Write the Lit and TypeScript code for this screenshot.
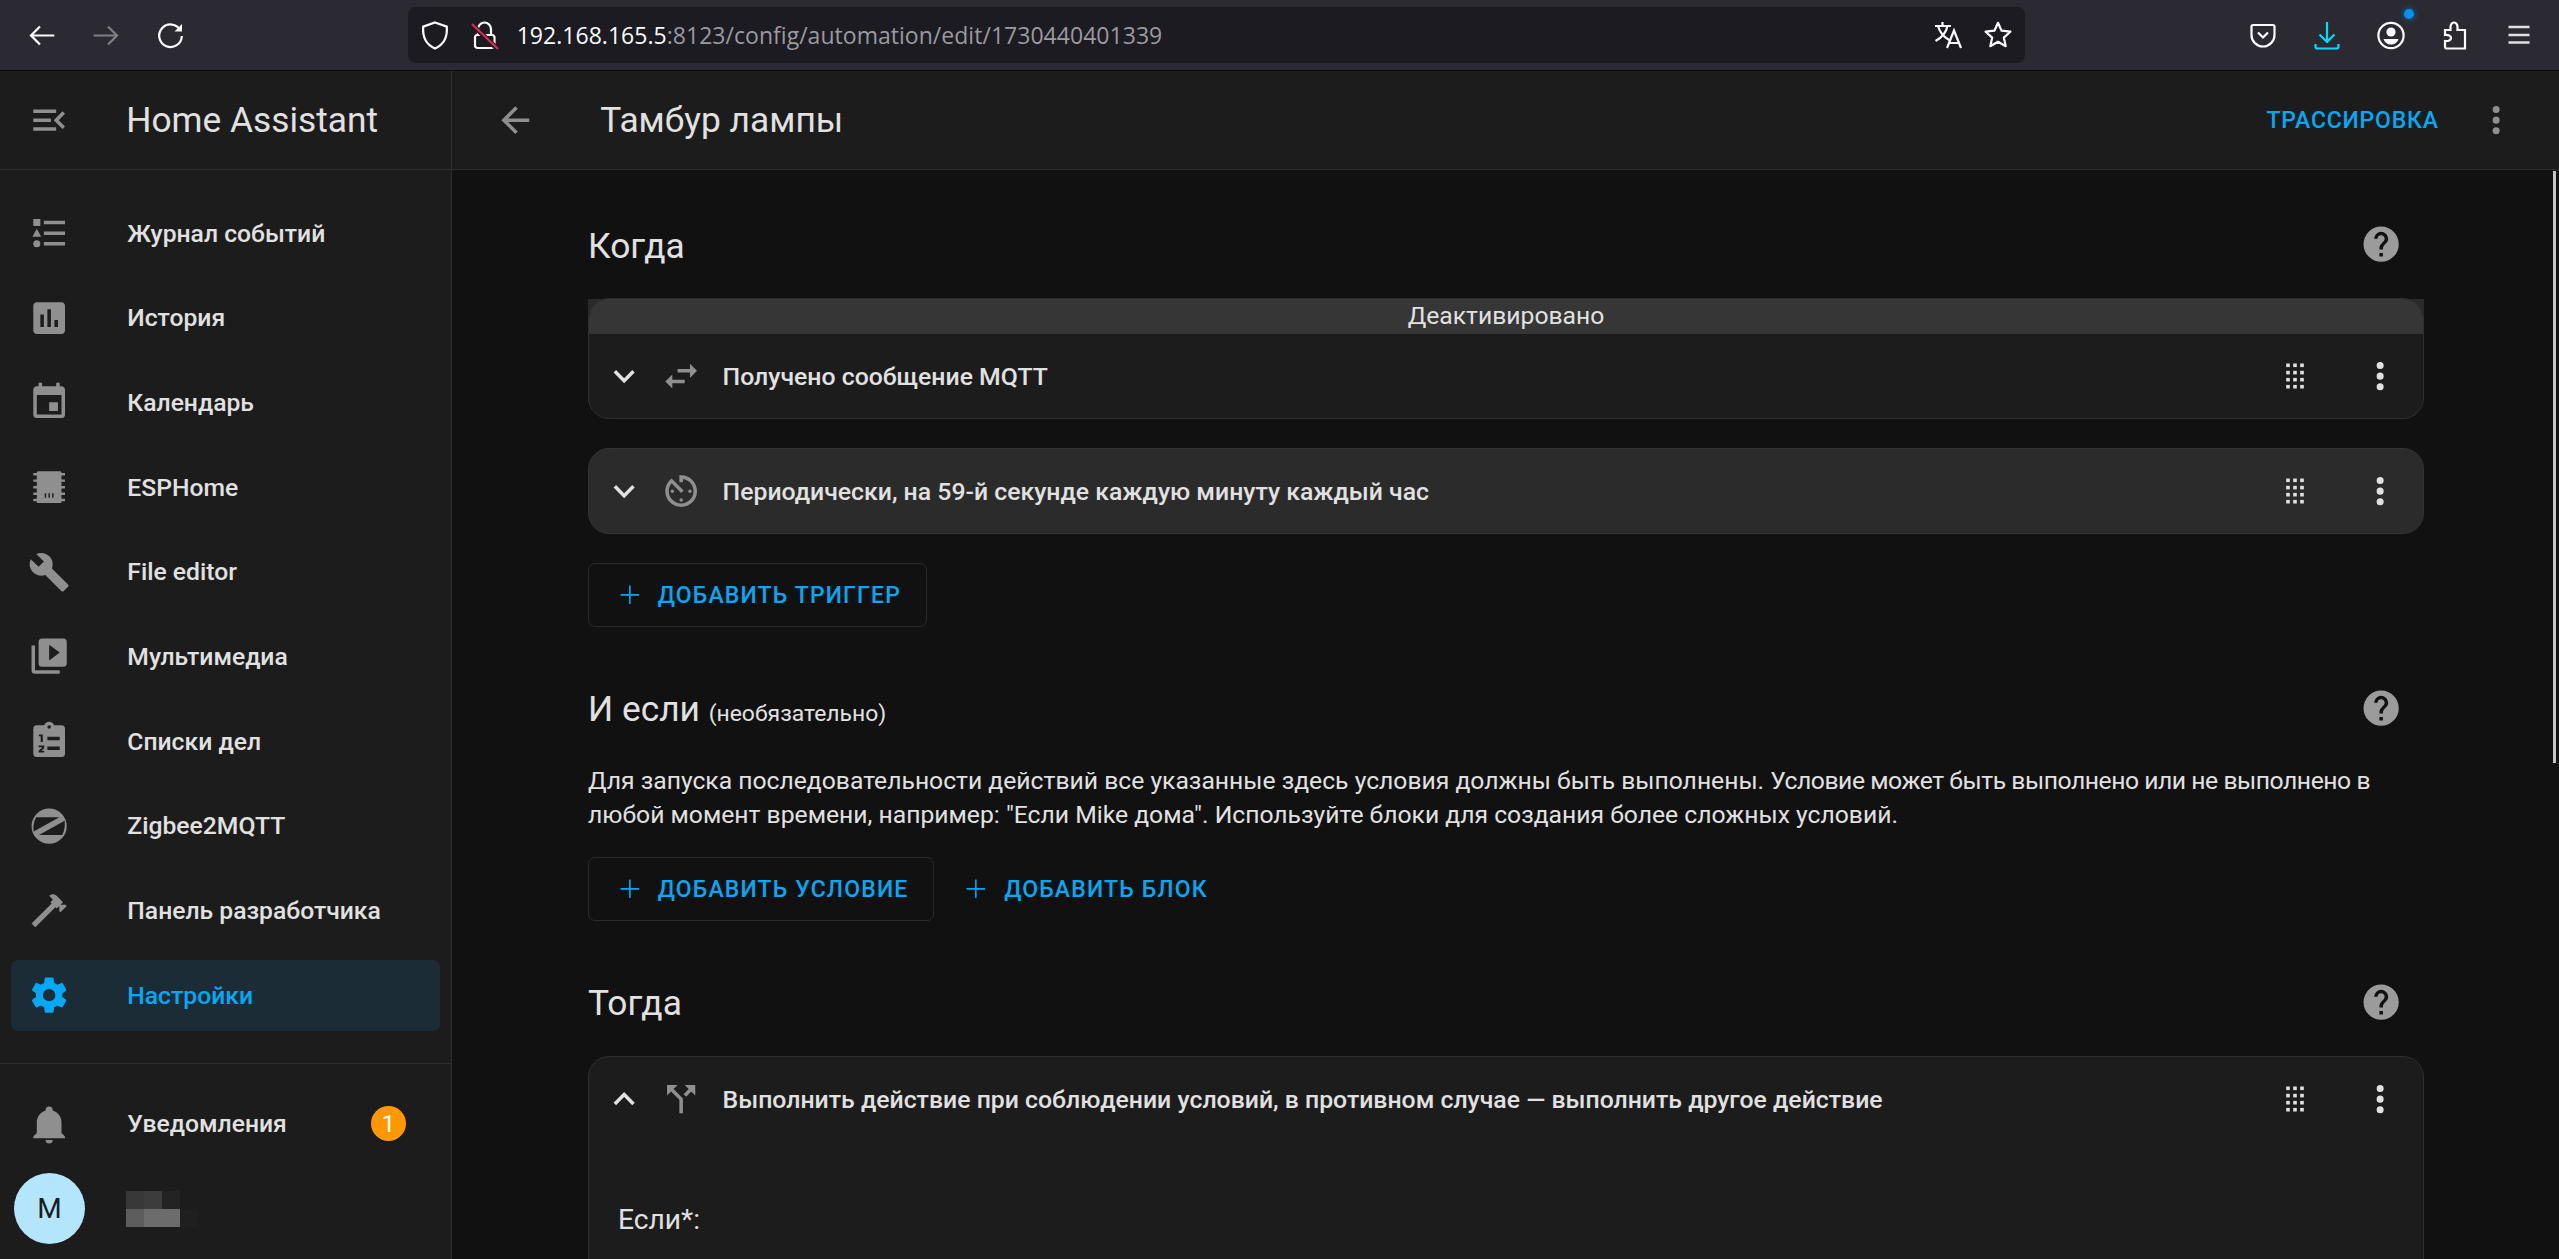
import { LitElement, html, css, svg } from "lit";
import { customElement } from "lit/decorators.js";

const P = {
  menuOpen: "M21,15.61L19.59,17L14.58,12L19.59,7L21,8.39L17.44,12L21,15.61M3,6H16V8H3V6M3,13V11H13V13H3M3,18V16H16V18H3Z",
  journal: "M5,9.5L7.5,14H2.5L5,9.5M3,4H7V8H3V4M5,20A2,2 0 0,0 7,18A2,2 0 0,0 5,16A2,2 0 0,0 3,18A2,2 0 0,0 5,20M9,5V7H21V5H9M9,19H21V17H9V19M9,13H21V11H9V13Z",
  chart: "M19 3H5C3.9 3 3 3.9 3 5V19C3 20.1 3.9 21 5 21H19C20.1 21 21 20.1 21 19V5C21 3.9 20.1 3 19 3M9 17H7V10H9V17M13 17H11V7H13V17M17 17H15V13H17V17Z",
  calendar: "M19,19H5V8H19M16,1V3H8V1H6V3H5C3.89,3 3,3.89 3,5V19A2,2 0 0,0 5,21H19A2,2 0 0,0 21,19V5C21,3.89 20.1,3 19,3H18V1M17,12H12V17H17V12Z",
  chip: "M5 3.5A1 1 0 0 1 6 3H18A1 1 0 0 1 19 3.5V4H21V5.4H19V7.6H21V9H19V11.4H21V12.8H19V15H21V16.4H19V18.6H21V20H19V20.5A1 1 0 0 1 18 21H6A1 1 0 0 1 5 20.5V20H3V18.6H5V16.4H3V15H5V12.8H3V11.4H5V9H3V7.6H5V5.4H3V4H5V3.5ZM9.5 15.5V18H10.3V15.5H9.5ZM11.6 15.5V18H12.4V15.5H11.6ZM13.7 15.5V18H14.5V15.5H13.7Z",
  wrench: "M22.7,19L13.6,9.9C14.5,7.6 14,4.9 12.1,3C10.1,1 7.1,0.6 4.7,1.7L9,6L6,9L1.6,4.7C0.4,7.1 0.9,10.1 2.9,12.1C4.8,14 7.5,14.5 9.8,13.6L18.9,22.7C19.3,23.1 19.9,23.1 20.3,22.7L22.6,20.4C23.1,20 23.1,19.3 22.7,19Z",
  media: "M4,6H2V20A2,2 0 0,0 4,22H18V20H4M20,2H8A2,2 0 0,0 6,4V16A2,2 0 0,0 8,18H20A2,2 0 0,0 22,16V4A2,2 0 0,0 20,2M12,14.5V5.5L18,10L12,14.5Z",
  todo: "M12,3A1,1 0 0,1 13,4A1,1 0 0,1 12,5A1,1 0 0,1 11,4A1,1 0 0,1 12,3M19,3H14.82C14.4,1.84 13.3,1 12,1C10.7,1 9.6,1.84 9.18,3H5A2,2 0 0,0 3,5V19A2,2 0 0,0 5,21H19A2,2 0 0,0 21,19V5A2,2 0 0,0 19,3ZM11,9.5V11.5H18V9.5H11ZM11,15V17H18V15H11ZM6.2,8.2V9.2H7.2V12.5H8.4V8.2H6.2ZM6,14.4V15.4H8V15.8L6,17.4V18.4H9.2V17.4H7.6L9.2,16V14.4H6Z",
  zigbee: "M12,2A10,10 0 0,0 2,12A10,10 0 0,0 12,22A10,10 0 0,0 22,12A10,10 0 0,0 12,2ZM4.6,7H17.8L3.2,15C2.9,12.5 3.2,9.5 4.6,7ZM20.8,9C21.1,11.5 20.8,14.5 19.4,17H6.2L20.8,9Z",
  hammer: "M2 19.63L13.43 8.2L12.72 7.5L14.14 6.07L12 3.89C13.2 2.7 15.09 2.7 16.27 3.89L19.87 7.5L18.45 8.91H21.29L22 9.62L18.45 13.21L17.74 12.5V9.62L16.27 11.04L15.56 10.33L4.13 21.76L2 19.63Z",
  cog: "M12,15.5A3.5,3.5 0 0,1 8.5,12A3.5,3.5 0 0,1 12,8.5A3.5,3.5 0 0,1 15.5,12A3.5,3.5 0 0,1 12,15.5M19.43,12.97C19.47,12.65 19.5,12.33 19.5,12C19.5,11.67 19.47,11.34 19.43,11L21.54,9.37C21.73,9.22 21.78,8.95 21.66,8.73L19.66,5.27C19.54,5.05 19.27,4.96 19.05,5.05L16.56,6.05C16.04,5.66 15.5,5.32 14.87,5.07L14.5,2.42C14.46,2.18 14.25,2 14,2H10C9.75,2 9.54,2.18 9.5,2.42L9.13,5.07C8.5,5.32 7.96,5.66 7.44,6.05L4.95,5.05C4.73,4.96 4.46,5.05 4.34,5.27L2.34,8.73C2.21,8.95 2.27,9.22 2.46,9.37L4.57,11C4.53,11.34 4.5,11.67 4.5,12C4.5,12.33 4.53,12.65 4.57,12.97L2.46,14.63C2.27,14.78 2.21,15.05 2.34,15.27L4.34,18.73C4.46,18.95 4.73,19.03 4.95,18.95L7.44,17.94C7.96,18.34 8.5,18.68 9.13,18.93L9.5,21.58C9.54,21.82 9.75,22 10,22H14C14.25,22 14.46,21.82 14.5,21.58L14.87,18.93C15.5,18.67 16.04,18.34 16.56,17.94L19.05,18.95C19.27,19.03 19.54,18.95 19.66,18.73L21.66,15.27C21.78,15.05 21.73,14.78 21.54,14.63L19.43,12.97Z",
  bell: "M21,19V20H3V19L5,17V11C5,7.9 7.03,5.17 10,4.29C10,4.19 10,4.1 10,4A2,2 0 0,1 12,2A2,2 0 0,1 14,4C14,4.1 14,4.19 14,4.29C16.97,5.17 19,7.9 19,11V17L21,19M14,21A2,2 0 0,1 12,23A2,2 0 0,1 10,21",
  arrowLeft: "M20,11V13H8L13.5,18.5L12.08,19.92L4.16,12L12.08,4.08L13.5,5.5L8,11H20Z",
  dots: "M12,16A2,2 0 0,1 14,18A2,2 0 0,1 12,20A2,2 0 0,1 10,18A2,2 0 0,1 12,16M12,10A2,2 0 0,1 14,12A2,2 0 0,1 12,14A2,2 0 0,1 10,12A2,2 0 0,1 12,10M12,4A2,2 0 0,1 14,6A2,2 0 0,1 12,8A2,2 0 0,1 10,6A2,2 0 0,1 12,4Z",
  help: "M15.07,11.25L14.17,12.17C13.45,12.89 13,13.5 13,15H11V14.5C11,13.39 11.45,12.39 12.17,11.67L13.41,10.41C13.78,10.05 14,9.55 14,9C14,7.89 13.1,7 12,7A2,2 0 0,0 10,9H8A4,4 0 0,1 12,5A4,4 0 0,1 16,9C16,9.88 15.64,10.67 15.07,11.25M13,19H11V17H13M12,2A10,10 0 0,0 2,12A10,10 0 0,0 12,22A10,10 0 0,0 22,12C22,6.47 17.5,2 12,2Z",
  swap: "M21,9L17,5V8H10V10H17V13M7,11L3,15L7,19V16H14V14H7V11Z",
  timer: "M11,17A1,1 0 0,0 12,18A1,1 0 0,0 13,17A1,1 0 0,0 12,16A1,1 0 0,0 11,17M11,3V7H13V5.08C16.39,5.57 19,8.47 19,12A7,7 0 0,1 12,19A7,7 0 0,1 5,12C5,10.32 5.59,8.78 6.58,7.58L12,13L13.41,11.59L6.61,4.79V4.81C4.42,6.45 3,9.05 3,12A9,9 0 0,0 12,21A9,9 0 0,0 21,12A9,9 0 0,0 12,3M18,12A1,1 0 0,0 17,11A1,1 0 0,0 16,12A1,1 0 0,0 17,13A1,1 0 0,0 18,12M6,12A1,1 0 0,0 7,13A1,1 0 0,0 8,12A1,1 0 0,0 7,11A1,1 0 0,0 6,12Z",
  split: "M14,4L16.29,6.29L13.41,9.17L14.83,10.59L17.71,7.71L20,10V4M10,4H4V10L6.29,7.71L11,12.41V20H13V11.59L7.71,6.29",
  down: "M7.41,8.58L12,13.17L16.59,8.58L18,10L12,16L6,10L7.41,8.58Z",
  up: "M7.41,15.41L12,10.83L16.59,15.41L18,14L12,8L6,14L7.41,15.41Z",
  plus: "M19,12.6H12.6V19H11.4V12.6H5V11.4H11.4V5H12.6V11.4H19V12.6Z",
};

const mdi = (d: string, cls = "") =>
  html`<svg class="mdi ${cls}" viewBox="0 0 24 24"><path fill-rule="evenodd" d=${d}></path></svg>`;

const gridDots = () => {
  const xs = [7, 14, 21];
  const ys = [3.3, 10.6, 17.7, 24.7];
  return html`<svg class="grip" viewBox="0 0 28 28">
    ${ys.flatMap((y) => xs.map((x) => svg`<rect x=${x - 1.8} y=${y - 1.8} width="3.6" height="3.6"></rect>`))}
  </svg>`;
};

const ff = {
  back: svg`<path d="M26.3 14.5H3.5M12 5.5L3 14.5L12 23.5"></path>`,
  reload: svg`<path d="M24.5 9.5A11.3 11.3 0 1 0 25.8 15"></path><path class="fill" d="M18.5 10.5L26 3V10.5Z"></path>`,
  shield: svg`<path d="M14 1.5L25.8 5.6C26.6 16 23 23.5 14 27.5C5 23.5 1.4 16 2.2 5.6Z"></path>`,
  translate: svg`<path d="M1 5H17M8.5 1V5M13.5 5C12 12 7 17 1.5 20M4 5C6 12 10 16 15 19M13 27L20 9.5L27 27M15.3 22H24.7"></path>`,
  star: svg`<path d="M14 1.8L17.6 9.7L26.4 10.7L19.8 16.6L21.7 25.2L14 20.8L6.3 25.2L8.2 16.6L1.6 10.7L10.4 9.7Z" stroke-linejoin="round"></path>`,
  pocket: svg`<path d="M4 4H24A1.5 1.5 0 0 1 25.5 5.5V14A11.5 11.5 0 0 1 2.5 14V5.5A1.5 1.5 0 0 1 4 4Z"></path><path d="M9 11.5L14 16.5L19 11.5"></path>`,
  download: svg`<path d="M14 1V21M6.5 13.5L14 21L21.5 13.5M2.5 23V25.5A2 2 0 0 0 4.5 27.5H23.5A2 2 0 0 0 25.5 25.5V23"></path>`,
  account: svg`<circle cx="14" cy="14.5" r="12.6"></circle><circle class="fill" cx="14" cy="11" r="4.6" stroke="none"></circle><path class="fill" stroke="none" d="M6.5 18H21.5C20.5 21.5 17.5 23.5 14 23.5C10.5 23.5 7.5 21.5 6.5 18Z"></path>`,
  puzzle: svg`<path d="M4 9H9.5C9 5.5 10 1.5 13 1.5C16 1.5 17 5.5 16.5 9H24V27.5H6A2 2 0 0 1 4 25.5V20C7.5 20.5 10 19 10 17C10 15 7.5 13.5 4 14V9Z"></path>`,
  menu: svg`<path d="M3.5 6H24.5M3.5 14H24.5M3.5 21.5H24.5"></path>`,
};

const ffIcon = (content: unknown, cls = "") =>
  html`<svg class="ff ${cls}" viewBox="0 0 28 28">${content}</svg>`;

const NAV = [
  ["Журнал событий", P.journal],
  ["История", P.chart],
  ["Календарь", P.calendar],
  ["ESPHome", P.chip],
  ["File editor", P.wrench],
  ["Мультимедиа", P.media],
  ["Списки дел", P.todo],
  ["Zigbee2MQTT", P.zigbee],
  ["Панель разработчика", P.hammer],
  ["Настройки", P.cog],
];

const PIX = ["c1", "c2", "c3", "c0", "c4", "c5", "c5", "c6"];

@customElement("app-root")
export class AppRoot extends LitElement {
  static styles = css`
    :host { display: block; width: 2559px; height: 1259px; overflow: hidden; background: #111; font-family: Roboto, sans-serif; color: #e1e1e1; }
    * { box-sizing: border-box; }
    .mdi { width: 42.3px; height: 42.3px; fill: #8f8f8f; flex: none; display: block; }
    .toolbar { height: 71px; background: #2b2a33; border-bottom: 1px solid #0c0c0d; display: flex; align-items: center; padding-left: 9.7px; }
    .tb { width: 64px; height: 56px; display: flex; align-items: center; justify-content: center; flex: none; position: relative; }
    .ff { width: 28px; height: 28px; fill: none; stroke: #fbfbfe; stroke-width: 2.2; display: block; flex: none; overflow: visible; }
    .ff .fill { fill: #fbfbfe; stroke: none; }
    .ff.dim { opacity: .4; }
    .ff.cyan { stroke: #00ddff; }
    .ff.thick { stroke-width: 2.4; stroke: #dedee3; }
    .url { margin-left: 206px; margin-right: 206.6px; width: 1617px; height: 56px; background: #1c1b22; border-radius: 8px; display: flex; align-items: center; padding: 0 13px; flex: none; }
    .lock { margin-left: 22px; position: relative; width: 28px; height: 28px; flex: none; }
    .lock svg { display: block; overflow: visible; }
    .addr { margin-left: 18px; flex: 1; font: 400 23px "Open Sans", sans-serif; letter-spacing: 0.03px; color: #9a9a9f; white-space: nowrap; }
    .addr b { font-weight: 400; color: #fbfbfe; }
    .star { margin-left: 21.5px; }
    .bluedot { position: absolute; left: 45px; top: 2px; width: 10px; height: 10px; border-radius: 50%; background: #0090ed; box-shadow: 0 0 4px 2px rgba(0, 144, 237, .3); }
    .body { display: flex; height: 1188px; }
    .side { width: 452px; flex: none; background: #1c1c1c; border-right: 1px solid #2f2f2f; display: flex; flex-direction: column; }
    .bar { height: 99px; flex: none; border-bottom: 1px solid #2f2f2f; display: flex; align-items: center; }
    .side .bar { padding-left: 28px; gap: 56px; }
    .brand { font-size: 35.3px; font-weight: 400; white-space: nowrap; }
    .nav { display: flex; flex-direction: column; gap: 14px; padding: 28px 11px 0; }
    .row { height: 70.67px; border-radius: 7px; display: flex; align-items: center; gap: 57px; padding-left: 17px; font-size: 24.7px; font-weight: 500; white-space: nowrap; }
    .row.on { background: #1b2c36; color: #03a9f4; }
    .row.on .mdi { fill: #03a9f4; }
    .divider { height: 1px; background: #2f2f2f; margin-top: 32px; flex: none; }
    .notif { margin: 25px 11px 0; }
    .badge { margin-left: auto; margin-right: 34px; width: 35px; height: 35px; border-radius: 50%; background: #ff9800; color: #fff; display: flex; align-items: center; justify-content: center; font-size: 24.7px; font-weight: 400; }
    .user { display: flex; align-items: center; gap: 41px; margin: 14px 0 0 14px; }
    .avatar { width: 71px; height: 71px; border-radius: 50%; background: #b3e5fc; color: #1c1c1c; display: flex; align-items: center; justify-content: center; font-size: 28px; flex: none; }
    .pix { display: grid; grid-template-columns: repeat(4, 18px); grid-auto-rows: 18px; }
    .c0 { background: transparent; } .c1 { background: #383838; } .c2 { background: #3c3c3c; } .c3 { background: #232323; }
    .c4 { background: #5d5d5d; } .c5 { background: #6c6c6c; } .c6 { background: #1f1f1f; }
    .main { flex: 1; min-width: 0; display: flex; flex-direction: column; position: relative; }
    .main .bar { background: #1c1c1c; padding-left: 42px; padding-right: 42px; }
    .bar-back { margin-right: 64px; }
    .page-title { font-size: 35.3px; font-weight: 400; flex: 1; white-space: nowrap; }
    .trace { color: #03a9f4; font-size: 23px; font-weight: 500; letter-spacing: 0.8px; margin-right: 36px; white-space: nowrap; }
    .content { flex: 1; overflow: hidden; padding: 53px 135px 0 136px; }
    .scroll { position: absolute; right: 3px; top: 100px; width: 3px; height: 592px; background: #c4c4c4; }
    .head { height: 42px; display: flex; align-items: center; justify-content: space-between; padding-right: 22px; }
    .head.later { margin-top: 60px; }
    .head h2 { margin: 0; padding-top: 3px; font-size: 35.3px; font-weight: 400; white-space: nowrap; }
    .head.later h2 { padding-top: 1px; }
    .head small { font-size: 22.9px; }
    .help { fill: #9b9b9b; }
    .dwrap { margin-top: 33px; background: linear-gradient(#111 1px, #2a2a2a 1px, #2a2a2a 20px, transparent 20px); }
    .card { border: 1px solid #2f2f2f; border-radius: 21px; background: #1c1c1c; overflow: hidden; margin-top: 29px; }
    .card.first { margin-top: 33px; }
    .dwrap .card { margin-top: 0; }
    .card.hover { background: #2b2b2b; border-color: #333; }
    .card.tall { height: 400px; }
    .disabled { height: 36px; background: #363636; text-align: center; font-size: 24.7px; line-height: 36px; margin: -1px -1px 0; white-space: nowrap; }
    .line { height: 84px; display: flex; align-items: center; padding: 0 22px 0 14px; font-size: 24.8px; font-weight: 500; white-space: nowrap; }
    .line .chev { fill: #e1e1e1; }
    .line .type { margin-left: 15px; margin-right: 20px; }
    .line .txt { flex: 1; }
    .grip { width: 28px; height: 28px; fill: #e1e1e1; display: block; flex: none; margin-right: 50px; }
    .line .more { fill: #e1e1e1; }
    .btn { display: inline-flex; align-items: center; height: 64px; padding: 0 25px; gap: 12px; color: #03a9f4; font-size: 23px; font-weight: 500; letter-spacing: 1.15px; white-space: nowrap; border-radius: 7px; flex: none; border: 1px solid transparent; }
    .btn .mdi { width: 31.7px; height: 31.7px; fill: #03a9f4; }
    .btn.box { border-color: #2a2a2a; }
    .actions { margin-top: 29px; }
    .actions.tight { margin-top: 25px; display: flex; gap: 0; }
    .desc { margin: 35px 0 0; font-size: 24.7px; line-height: 34px; }
    .tail { letter-spacing: -0.45px; }
    .if { margin: 62px 0 0 29px; font-size: 28.2px; }
  `;

  render() {
    return html`
      <div class="toolbar">
        <div class="tb">${ffIcon(ff.back)}</div>
        <div class="tb"><svg class="ff dim" viewBox="0 0 28 28"><g transform="translate(28 0) scale(-1 1)">${ff.back}</g></svg></div>
        <div class="tb">${ffIcon(ff.reload)}</div>
        <div class="url">
          ${ffIcon(ff.shield)}
          <div class="lock">
            <svg width="28" height="28" viewBox="0 0 28 28">
              <path d="M7 14V8A6.5 6.5 0 0 1 20 8V14" fill="none" stroke="#fbfbfe" stroke-width="2.2"></path>
              <rect x="4" y="14" width="19.5" height="13" rx="2.5" fill="none" stroke="#fbfbfe" stroke-width="2.2"></rect>
              <path d="M1 3.5L27 28.5" stroke="#1c1b22" stroke-width="5"></path>
              <path d="M1 3L27 28" stroke="#e22850" stroke-width="2.2"></path>
            </svg>
          </div>
          <div class="addr"><b>192.168.165.5</b>:8123/config/automation/edit/1730440401339</div>
          ${ffIcon(ff.translate)}
          <span class="star">${ffIcon(ff.star)}</span>
        </div>
        <div class="tb">${ffIcon(ff.pocket)}</div>
        <div class="tb">${ffIcon(ff.download, "cyan")}</div>
        <div class="tb">${ffIcon(ff.account)}<span class="bluedot"></span></div>
        <div class="tb">${ffIcon(ff.puzzle)}</div>
        <div class="tb">${ffIcon(ff.menu, "thick")}</div>
      </div>
      <div class="body">
        <aside class="side">
          <div class="bar">${mdi(P.menuOpen)}<span class="brand">Home Assistant</span></div>
          <nav class="nav">
            ${NAV.map(([label, d], i) => html`<div class="row ${i === 9 ? "on" : ""}">${mdi(d)}<span>${label}</span></div>`)}
          </nav>
          <div class="divider"></div>
          <div class="row notif">${mdi(P.bell)}<span>Уведомления</span><span class="badge">1</span></div>
          <div class="user">
            <div class="avatar">M</div>
            <div class="pix">${PIX.map((c) => html`<i class=${c}></i>`)}</div>
          </div>
        </aside>
        <main class="main">
          <div class="bar">
            ${mdi(P.arrowLeft, "bar-back")}
            <span class="page-title">Тамбур лампы</span>
            <span class="trace">ТРАССИРОВКА</span>
            ${mdi(P.dots)}
          </div>
          <div class="content">
            ${this.head(html`<h2>Когда</h2>`)}
            <div class="dwrap">
              <div class="card">
                <div class="disabled">Деактивировано</div>
                ${this.line(P.down, P.swap, "Получено сообщение MQTT")}
              </div>
            </div>
            <div class="card hover">
              ${this.line(P.down, P.timer, "Периодически, на 59-й секунде каждую минуту каждый час")}
            </div>
            <div class="actions"><span class="btn box">${mdi(P.plus)}ДОБАВИТЬ ТРИГГЕР</span></div>
            ${this.head(html`<h2>И если <small>(необязательно)</small></h2>`, true)}
            <p class="desc">Для запуска последовательности действий все указанные здесь условия должны быть выполнены. <span class="tail">Условие может быть выполнено или не выполнено в</span><br />любой момент времени, например: "Если Mike дома". Используйте блоки для создания более сложных условий.</p>
            <div class="actions tight">
              <span class="btn box">${mdi(P.plus)}ДОБАВИТЬ УСЛОВИЕ</span>
              <span class="btn">${mdi(P.plus)}ДОБАВИТЬ БЛОК</span>
            </div>
            ${this.head(html`<h2>Тогда</h2>`, true)}
            <div class="card first tall">
              ${this.line(P.up, P.split, "Выполнить действие при соблюдении условий, в противном случае — выполнить другое действие")}
              <div class="if">Если*:</div>
            </div>
          </div>
          <div class="scroll"></div>
        </main>
      </div>
    `;
  }

  private head(title: unknown, later = false) {
    return html`<div class="head ${later ? "later" : ""}">${title}${mdi(P.help, "help")}</div>`;
  }

  private line(chev: string, icon: string, text: string) {
    return html`<div class="line">
      ${mdi(chev, "chev")}${mdi(icon, "type")}
      <span class="txt">${text}</span>
      ${gridDots()}${mdi(P.dots, "more")}
    </div>`;
  }
}
